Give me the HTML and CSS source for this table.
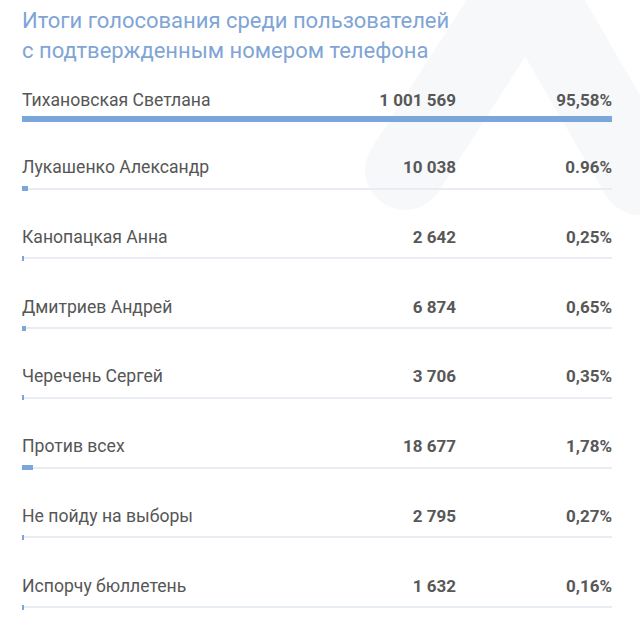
FILE: index.html
```html
<!DOCTYPE html>
<html lang="ru">
<head>
<meta charset="utf-8">
<link rel="stylesheet" href="styles.css">
</head>
<body>
<div class="page">
  <h1 class="title">Итоги голосования среди пользователей<br>с подтвержденным номером телефона</h1>
  <ul class="results">
    <li class="row row-lead">
      <div class="line"><span class="name">Тихановская Светлана</span><span class="count">1 001 569</span><span class="pct">95,58%</span></div>
      <div class="track"><div class="fill" style="width:100%"></div></div>
    </li>
    <li class="row">
      <div class="line"><span class="name">Лукашенко Александр</span><span class="count">10 038</span><span class="pct">0.96%</span></div>
      <div class="track"><div class="fill" style="width:0.96%"></div></div>
    </li>
    <li class="row">
      <div class="line"><span class="name">Канопацкая Анна</span><span class="count">2 642</span><span class="pct">0,25%</span></div>
      <div class="track"><div class="fill" style="width:0.25%"></div></div>
    </li>
    <li class="row">
      <div class="line"><span class="name">Дмитриев Андрей</span><span class="count">6 874</span><span class="pct">0,65%</span></div>
      <div class="track"><div class="fill" style="width:0.65%"></div></div>
    </li>
    <li class="row">
      <div class="line"><span class="name">Черечень Сергей</span><span class="count">3 706</span><span class="pct">0,35%</span></div>
      <div class="track"><div class="fill" style="width:0.35%"></div></div>
    </li>
    <li class="row">
      <div class="line"><span class="name">Против всех</span><span class="count">18 677</span><span class="pct">1,78%</span></div>
      <div class="track"><div class="fill" style="width:1.78%"></div></div>
    </li>
    <li class="row">
      <div class="line"><span class="name">Не пойду на выборы</span><span class="count">2 795</span><span class="pct">0,27%</span></div>
      <div class="track"><div class="fill" style="width:0.27%"></div></div>
    </li>
    <li class="row">
      <div class="line"><span class="name">Испорчу бюллетень</span><span class="count">1 632</span><span class="pct">0,16%</span></div>
      <div class="track"><div class="fill" style="width:0.16%"></div></div>
    </li>
  </ul>
</div>
</body>
</html>
```

FILE: styles.css
```css
html, body {
  margin: 0;
  padding: 0;
  background: #ffffff;
}
body {
  font-family: Roboto, "Noto Sans", "Liberation Sans", sans-serif;
  color: #555555;
  width: 640px;
  height: 638px;
  overflow: hidden;
  background-color: #ffffff;
  background-image: url("data:image/svg+xml;utf8,<svg xmlns='http://www.w3.org/2000/svg' width='640' height='260'><path d='M 405 170 L 527 -20 L 640 175' fill='none' stroke='%23f7f8fa' stroke-width='80' stroke-linejoin='round' stroke-linecap='round'/></svg>");
  background-repeat: no-repeat;
  background-position: 0 0;
}
.page {
  padding: 6px 28px 0 22px;
}
.title {
  margin: 0 0 22px 0;
  font-weight: 400;
  font-size: 22px;
  line-height: 30px;
  color: #7fa5d6;
}
.results {
  list-style: none;
  margin: 0;
  padding: 0;
}
.row {
  display: flex;
  flex-direction: column;
  gap: 7px;
  margin-bottom: 33.8px;
}
.line {
  display: flex;
  align-items: center;
  height: 24px;
  font-size: 17px;
  line-height: 24px;
}
.name {
  flex: 1;
  font-size: 17.6px;
  color: #565656;
}
.count {
  font-weight: 700;
  text-align: right;
  color: #585858;
}
.pct {
  width: 156px;
  font-weight: 700;
  text-align: right;
  color: #585858;
}
.track {
  height: 5px;
  display: flex;
  align-items: center;
  background: linear-gradient(#e8edf3, #e8edf3) 0 50% / 100% 2px no-repeat;
}
.fill {
  height: 5px;
  min-width: 1.5px;
  background: #7aa6dc;
}
.row-lead {
  gap: 4px;
  margin-bottom: 33px;
}
.row-lead .track {
  height: 6px;
}
.row-lead .fill {
  height: 6px;
}
```
